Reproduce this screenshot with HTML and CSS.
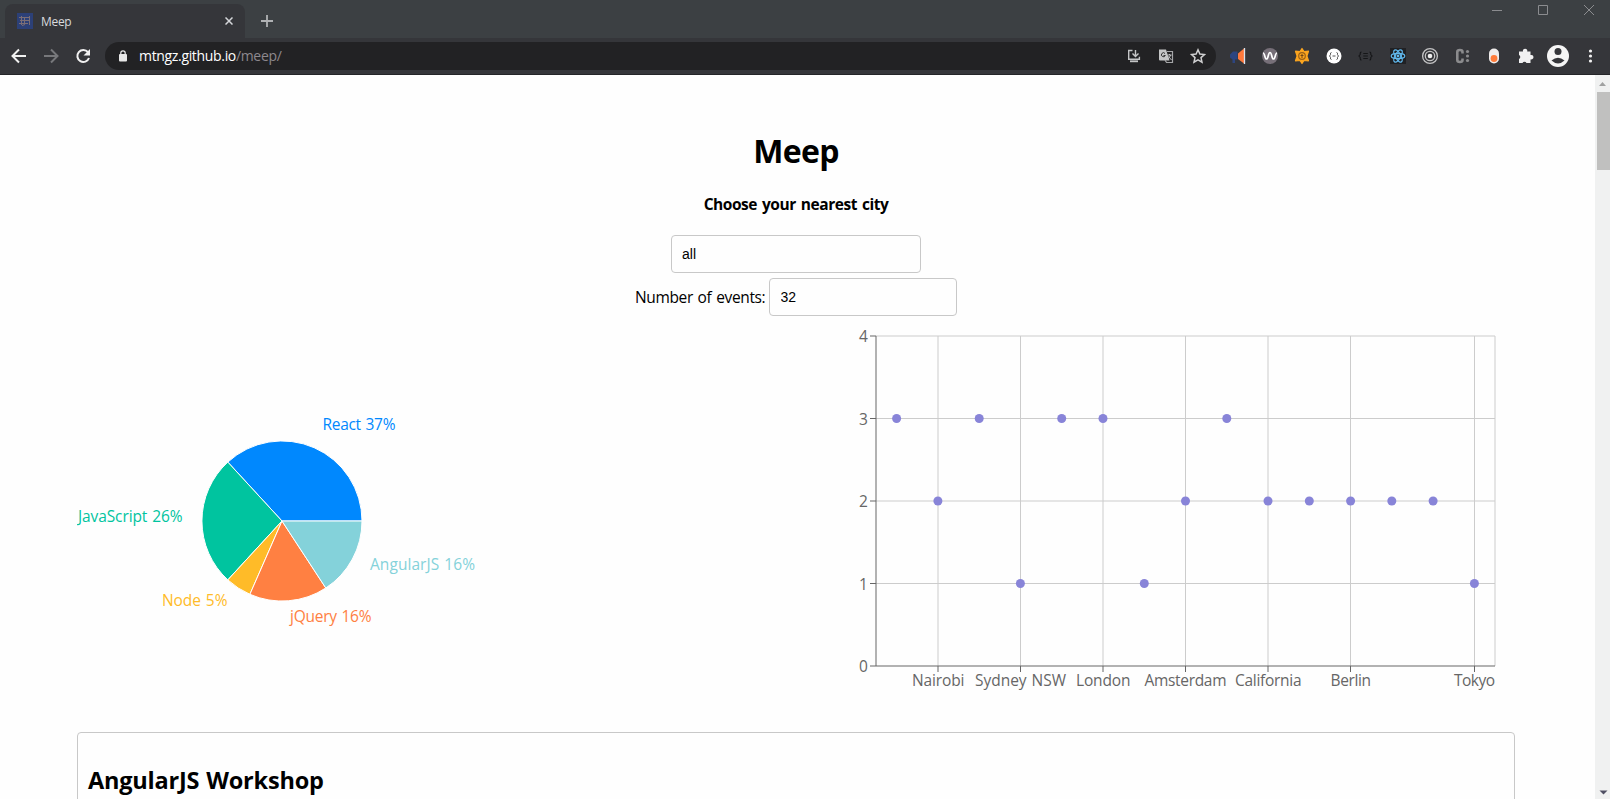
FILE: index.html
```html
<!DOCTYPE html>
<html lang="en">
<head>
<meta charset="utf-8">
<title>Meep</title>
<link rel="stylesheet" href="styles.css">
</head>
<body>
<div class="browser">
  <header class="tabstrip">
    <div class="tab">
      <svg class="favicon" viewBox="0 0 16 16"><rect width="16" height="16" fill="#2c4077"/><path d="M2 4.500h11M3 7.500h9M2 10.500h9M4.500 3v9M7.500 5v6M12.500 3v9M5 12.500l3-1" stroke="#7b6e76" stroke-width="1" fill="none"/></svg>
      <span class="tab-title">Meep</span>
      <svg class="tab-close" viewBox="0 0 8 8"><path d="M.5.5l7 7M7.500.5l-7 7" stroke="#d5d7da" stroke-width="1.500"/></svg>
    </div>
    <svg class="newtab" viewBox="0 0 12 12"><path d="M6 0v12M0 6h12" stroke="#b0b2b4" stroke-width="1.800"/></svg>
    <svg class="winbuttons" viewBox="0 0 104 12"><g fill="none" stroke="#8b8c8f"><path d="M0 6.500h10M46.500 1.500h9v9h-9z"/><path d="M92 1l10 10M102 1L92 11"/></g></svg>
  </header>
  <div class="toolbar">
    <svg class="nav" viewBox="0 0 84 20"><g fill="none" stroke-width="2"><path d="M18 10H5M11 3.500L4.500 10l6.500 6.500" stroke="#f1f1f1"/><path d="M36 10h13M43 3.500l6.500 6.500-6.500 6.500" stroke="#77787b"/><path d="M80 6.200A6 6 0 1 0 81 12" stroke="#f1f1f1"/></g><path d="M82 3v6.500h-6.500z" fill="#f1f1f1"/></svg>
    <div class="omnibox">
      <svg class="lock" viewBox="0 0 8 12"><rect y="4" width="8" height="7.500" rx="1" fill="#e8e8e8"/><path d="M1.800 5V3a2.200 2.200 0 0 1 4.400 0v2" fill="none" stroke="#e8e8e8" stroke-width="1.200"/></svg>
      <span class="url"><span class="host">mtngz.github.io</span><span class="path">/meep/</span></span>
      <svg class="actions" viewBox="1126 46 80 20">
        <g fill="none" stroke="#c4c5c6" stroke-width="1.400"><path d="M1132.500 50.500h-3.800v8.800h10.700v-2.500M1135.500 50v6M1132.500 53.500l3 3 3-3"/><path d="M1130 61.300h8" stroke-width="1.800"/></g>
        <path d="M1159 49.500h7l3.500 11h-9.500a1 1 0 0 1-1-1z" fill="#c4c5c6"/><path d="M1167 51.500h5.500v11h-6l-1.500-2.500" fill="none" stroke="#a5a6a8" stroke-width="1.200"/><path d="M1165 53.500a2 2 0 1 0 .3 2h-1.800" fill="none" stroke="#333"/><path d="M1167.500 55h4M1169.500 54v1M1171 55l-3 4M1168.500 56.500l3 3.500" fill="none" stroke="#c4c5c6"/>
        <path d="M1198 49.800l1.900 4.300 4.500.5-3.400 3 1 4.600-4-2.400-4 2.400 1-4.600-3.400-3 4.500-.5z" fill="none" stroke="#d0d0d1" stroke-width="1.500"/>
      </svg>
    </div>
    <svg class="extensions" viewBox="1224 42 380 28">
      <path d="M1244 48.500v15l-6-4.500v-5.500z" fill="#ff793c"/><path d="M1244.500 48v16" stroke="#d9e3ee" stroke-width="1.300"/><path d="M1237.500 51.500v8h-2.500v3.500h-2.500v-3.500l-2.500-2v-3l3-3z" fill="#2d4580"/>
      <circle cx="1270" cy="56" r="8" fill="#766f78"/><path d="M1263 53c2 0 1.500 6 3.500 6s1.500-6.500 3.500-6.500 1.500 6.500 3.500 6.500 1.500-6 3.500-6" fill="none" stroke="#fff" stroke-width="1.700"/>
      <path d="M1302 48.500l2 3 4.500-.3-1.600 4.800 1.600 4.800-4.500-.3-2 3-2-3-4.500.3 1.600-4.800-1.600-4.800 4.500.3z" fill="#fba51f" stroke="#fba51f" stroke-width="1.200" stroke-linejoin="round"/><circle cx="1302" cy="56" r="3.300" fill="none" stroke="#9a6118" stroke-width="1.200"/><path d="M1302 54v4M1300.500 55.500h3" stroke="#704617"/>
      <circle cx="1334" cy="56" r="7.500" fill="#fff"/><path d="M1331.500 52.500q-1.500 0-1 2.200l-1 1.300 1 1.300q-.5 2.200 1 2.200M1336.500 52.500q1.500 0 1 2.200l1 1.300-1 1.300q.5 2.200-1 2.200M1332.500 56h3" stroke="#555" fill="none"/>
      <path d="M1361.500 52q-1.500 0-1.300 2.500l-1.300 1.500 1.300 1.500q-.2 2.500 1.300 2.500M1369.500 52q1.500 0 1.300 2.500l1.300 1.500-1.300 1.500q.2 2.500-1.300 2.500M1363.300 53.500h4.500M1363.300 56h4.500M1363.300 58.500h4.500" stroke="#151618" stroke-width="1.100" fill="none"/>
      <path d="M1390 48h16v16h-16z" fill="#202124"/><g fill="none" stroke="#61b9ee" stroke-width="1.200"><ellipse cx="1398" cy="56" rx="6.800" ry="2.700"/><ellipse cx="1398" cy="56" rx="6.800" ry="2.700" transform="rotate(60 1398 56)"/><ellipse cx="1398" cy="56" rx="6.800" ry="2.700" transform="rotate(120 1398 56)"/></g><circle cx="1398" cy="56" r="1.400" fill="#61b9ee"/>
      <g fill="none" stroke="#c3c3c4" stroke-width="1.300"><circle cx="1430" cy="56" r="7.400"/><circle cx="1430" cy="56" r="4.700"/></g><circle cx="1430" cy="56" r="2.300" fill="#eee"/>
      <path d="M1462.500 53.500v-1.500q0-2-2.600-2t-2.600 2v8q0 2 2.600 2t2.600-2v-1.500" fill="none" stroke="#8b8b8d" stroke-width="2.600"/><g fill="#8b8b8d"><circle cx="1467.500" cy="51.500" r="1.600"/><circle cx="1467.500" cy="56" r="1.600"/><circle cx="1467.500" cy="60.500" r="1.600"/></g>
      <rect x="1489" y="48.500" width="10" height="15" rx="5" fill="#efeceb"/><circle cx="1494" cy="58.500" r="3.400" fill="#ff7b39"/>
      <path d="M1519 51.500h4a2.200 2.200 0 1 1 4.200 0h3.300v3.500a2.300 2.300 0 1 1 0 4.400v3.600h-4a2.200 2.200 0 0 0-4 0h-3.500v-4a2.200 2.200 0 0 0 0-4z" fill="#f1f1f1"/>
      <circle cx="1558" cy="56" r="11" fill="#f5f5f5"/><circle cx="1558" cy="51.500" r="3.500" fill="#35363a"/><path d="M1551.500 60.500q6.500-5.500 13 0-6.500 6-13 0z" fill="#35363a"/>
      <g fill="#f1f1f1"><circle cx="1590.500" cy="51" r="1.600"/><circle cx="1590.500" cy="56" r="1.600"/><circle cx="1590.500" cy="61" r="1.600"/></g>
    </svg>
  </div>
  <div class="viewport">
    <main class="app">
      <h1>Meep</h1>
      <h4>Choose your nearest city</h4>
      <input class="city" type="text" value="all">
      <div class="count"><label for="count">Number of events:</label><input id="count" type="text" value="32"></div>
      <div class="charts">
        <svg class="chart" viewBox="77 316 719 400">
          <g stroke="#fff" stroke-width="1">
            <path d="M282 521H362A80 80 0 0 0 227.800 462.100z" fill="#0088fe"/>
            <path d="M282 521L227.800 462.100A80 80 0 0 0 227.800 579.900z" fill="#00c49f"/>
            <path d="M282 521L227.800 579.900A80 80 0 0 0 249.900 594.300z" fill="#ffbb28"/>
            <path d="M282 521L249.900 594.300A80 80 0 0 0 325.800 588z" fill="#ff8042"/>
            <path d="M282 521L325.800 588A80 80 0 0 0 362 521z" fill="#84d2da"/>
          </g>
          <text x="322.500" y="429.500" textLength="73" fill="#0088fe">React 37%</text>
          <text x="78" y="521.500" textLength="104.500" fill="#00c49f">JavaScript 26%</text>
          <text x="162" y="605.500" textLength="65.500" fill="#ffbb28">Node 5%</text>
          <text x="290" y="621.500" textLength="81.500" fill="#ff8042">jQuery 16%</text>
          <text x="370" y="569.500" textLength="105" fill="#84d2da">AngularJS 16%</text>
        </svg>
        <svg class="chart" viewBox="796 316 719 400">
          <path class="grid" d="M876 336H1495M876 418.500H1495M876 501H1495M876 583.500H1495M938 336V666M1020.500 336V666M1103 336V666M1185.500 336V666M1268 336V666M1350.500 336V666M1474.500 336V666M1495 336V666"/>
          <path class="axis" d="M876 336V666M876 666H1495M870 336h6M870 418.500h6M870 501h6M870 583.500h6M870 666h6M938 666v6M1020.500 666v6M1103 666v6M1185.500 666v6M1268 666v6M1350.500 666v6M1474.500 666v6"/>
          <g class="dots"><circle cx="896.600" cy="418.500" r="4.500"/><circle cx="937.900" cy="501" r="4.500"/><circle cx="979.200" cy="418.500" r="4.500"/><circle cx="1020.400" cy="583.500" r="4.500"/><circle cx="1061.700" cy="418.500" r="4.500"/><circle cx="1103" cy="418.500" r="4.500"/><circle cx="1144.300" cy="583.500" r="4.500"/><circle cx="1185.500" cy="501" r="4.500"/><circle cx="1226.800" cy="418.500" r="4.500"/><circle cx="1268" cy="501" r="4.500"/><circle cx="1309.300" cy="501" r="4.500"/><circle cx="1350.600" cy="501" r="4.500"/><circle cx="1391.800" cy="501" r="4.500"/><circle cx="1433.100" cy="501" r="4.500"/><circle cx="1474.400" cy="583.500" r="4.500"/></g>
          <g class="tick"><text x="859" y="342">4</text><text x="859" y="424.500">3</text><text x="859" y="507">2</text><text x="859" y="589.500">1</text><text x="859" y="672">0</text>
          <text x="912" y="685.500" textLength="52.500">Nairobi</text><text x="975" y="685.500" textLength="91">Sydney NSW</text><text x="1076" y="685.500" textLength="54.500">London</text><text x="1144.500" y="685.500" textLength="82">Amsterdam</text><text x="1235" y="685.500" textLength="66.500">California</text><text x="1330.500" y="685.500" textLength="40.500">Berlin</text><text x="1454" y="685.500" textLength="41">Tokyo</text></g>
        </svg>
      </div>
      <section class="event"><h2>AngularJS Workshop</h2></section>
    </main>
    <div class="scrollbar">
      <svg viewBox="0 0 15 17"><path d="M4 11h7L7.500 7z" fill="#a0a1a1"/></svg>
      <div class="thumb"></div>
      <svg viewBox="0 0 15 17"><path d="M4.500 8.500h8l-4 4z" fill="#505064"/></svg>
    </div>
  </div>
</div>
</body>
</html>
```
FILE: styles.css
```css
* { box-sizing: border-box; }
body { margin: 0; font-family: "Open Sans", "Noto Sans", sans-serif; color: #000; overflow: hidden; }
svg { display: block; flex: none; }
.browser { display: flex; flex-direction: column; height: 799px; }
.tabstrip { display: flex; height: 38px; background: #3c4043; padding-left: 5px; flex: none; }
.tab { display: flex; align-items: center; width: 240px; height: 34px; margin-top: 4px; padding: 0 12px; background: #35363a; border-radius: 8px 8px 0 0; }
.favicon { width: 16px; height: 16px; }
.tab-title { margin-left: 8px; flex: 1; font-size: 12px; color: #d9dadd; letter-spacing: -.3px; }
.tab-close { width: 8px; height: 8px; }
.newtab { width: 12px; height: 12px; margin: 15px 0 0 16px; }
.winbuttons { width: 104px; height: 12px; margin: 4px 14px 0 auto; }
.toolbar { display: flex; align-items: center; height: 37px; background: #35363a; border-bottom: 1px solid #242528; flex: none; }
.nav { width: 84px; height: 20px; margin-left: 8px; }
.omnibox { display: flex; align-items: center; width: 1111px; height: 28px; margin-left: 13px; padding: 0 10px 0 14px; background: #222224; border-radius: 14px; }
.lock { width: 8px; height: 12px; }
.url { flex: 1; margin-left: 12px; font-size: 14px; line-height: 20px; white-space: nowrap; letter-spacing: -.33px; }
.host { color: #fff; }
.path { color: #8d888d; }
.actions { width: 80px; height: 20px; }
.extensions { width: 380px; height: 28px; margin-left: 8px; }
.viewport { display: flex; flex: 1; min-height: 0; background: #fefefe; }
.app { flex: 1; display: flex; flex-direction: column; align-items: center; padding: 54px 80px 0 77px; overflow: hidden; }
h1 { margin: 0; font-size: 32px; line-height: 44px; letter-spacing: -.7px; }
h4 { margin: 20px 0 0; font-size: 15.5px; line-height: 22px; letter-spacing: -.47px; word-spacing: 1.5px; }
input { height: 38px; border: 1px solid #c8c8c8; border-radius: 4px; padding: 0 10px; background: #fefefe; color: #000; font: 14px "Liberation Sans", Arial, sans-serif; outline: 0; }
.city { width: 250px; margin-top: 20px; flex: none; }
.count { display: flex; align-items: center; gap: 4px; margin-top: 5px; height: 38px; font-size: 15.5px; flex: none; }
.count label { width: 130px; white-space: nowrap; letter-spacing: -.35px; word-spacing: 1px; }
.count input { width: 188px; }
#count { padding-left: 10.5px; }
.charts { display: flex; width: 1438px; height: 400px; flex: none; }
.chart { width: 719px; height: 400px; font-size: 15.5px; word-spacing: 1px; }
.grid { fill: none; stroke: #ccc; }
.axis { fill: none; stroke: #666; }
.dots { fill: #8884d8; }
.tick { fill: #666; }
.event { width: 1438px; height: 160px; margin-top: 16px; padding: 31px 10px 0; border: 1px solid #c8c8c8; border-radius: 4px; flex: none; }
h2 { margin: 0; font-size: 23.5px; line-height: 32px; letter-spacing: -.2px; word-spacing: 1px; }
.scrollbar { width: 15px; flex: none; display: flex; flex-direction: column; background: #f0f1f1; }
.scrollbar svg { width: 15px; height: 17px; }
.thumb { width: 13px; height: 78px; margin: 0 0 auto 2px; background: #c0c0bf; }
```
